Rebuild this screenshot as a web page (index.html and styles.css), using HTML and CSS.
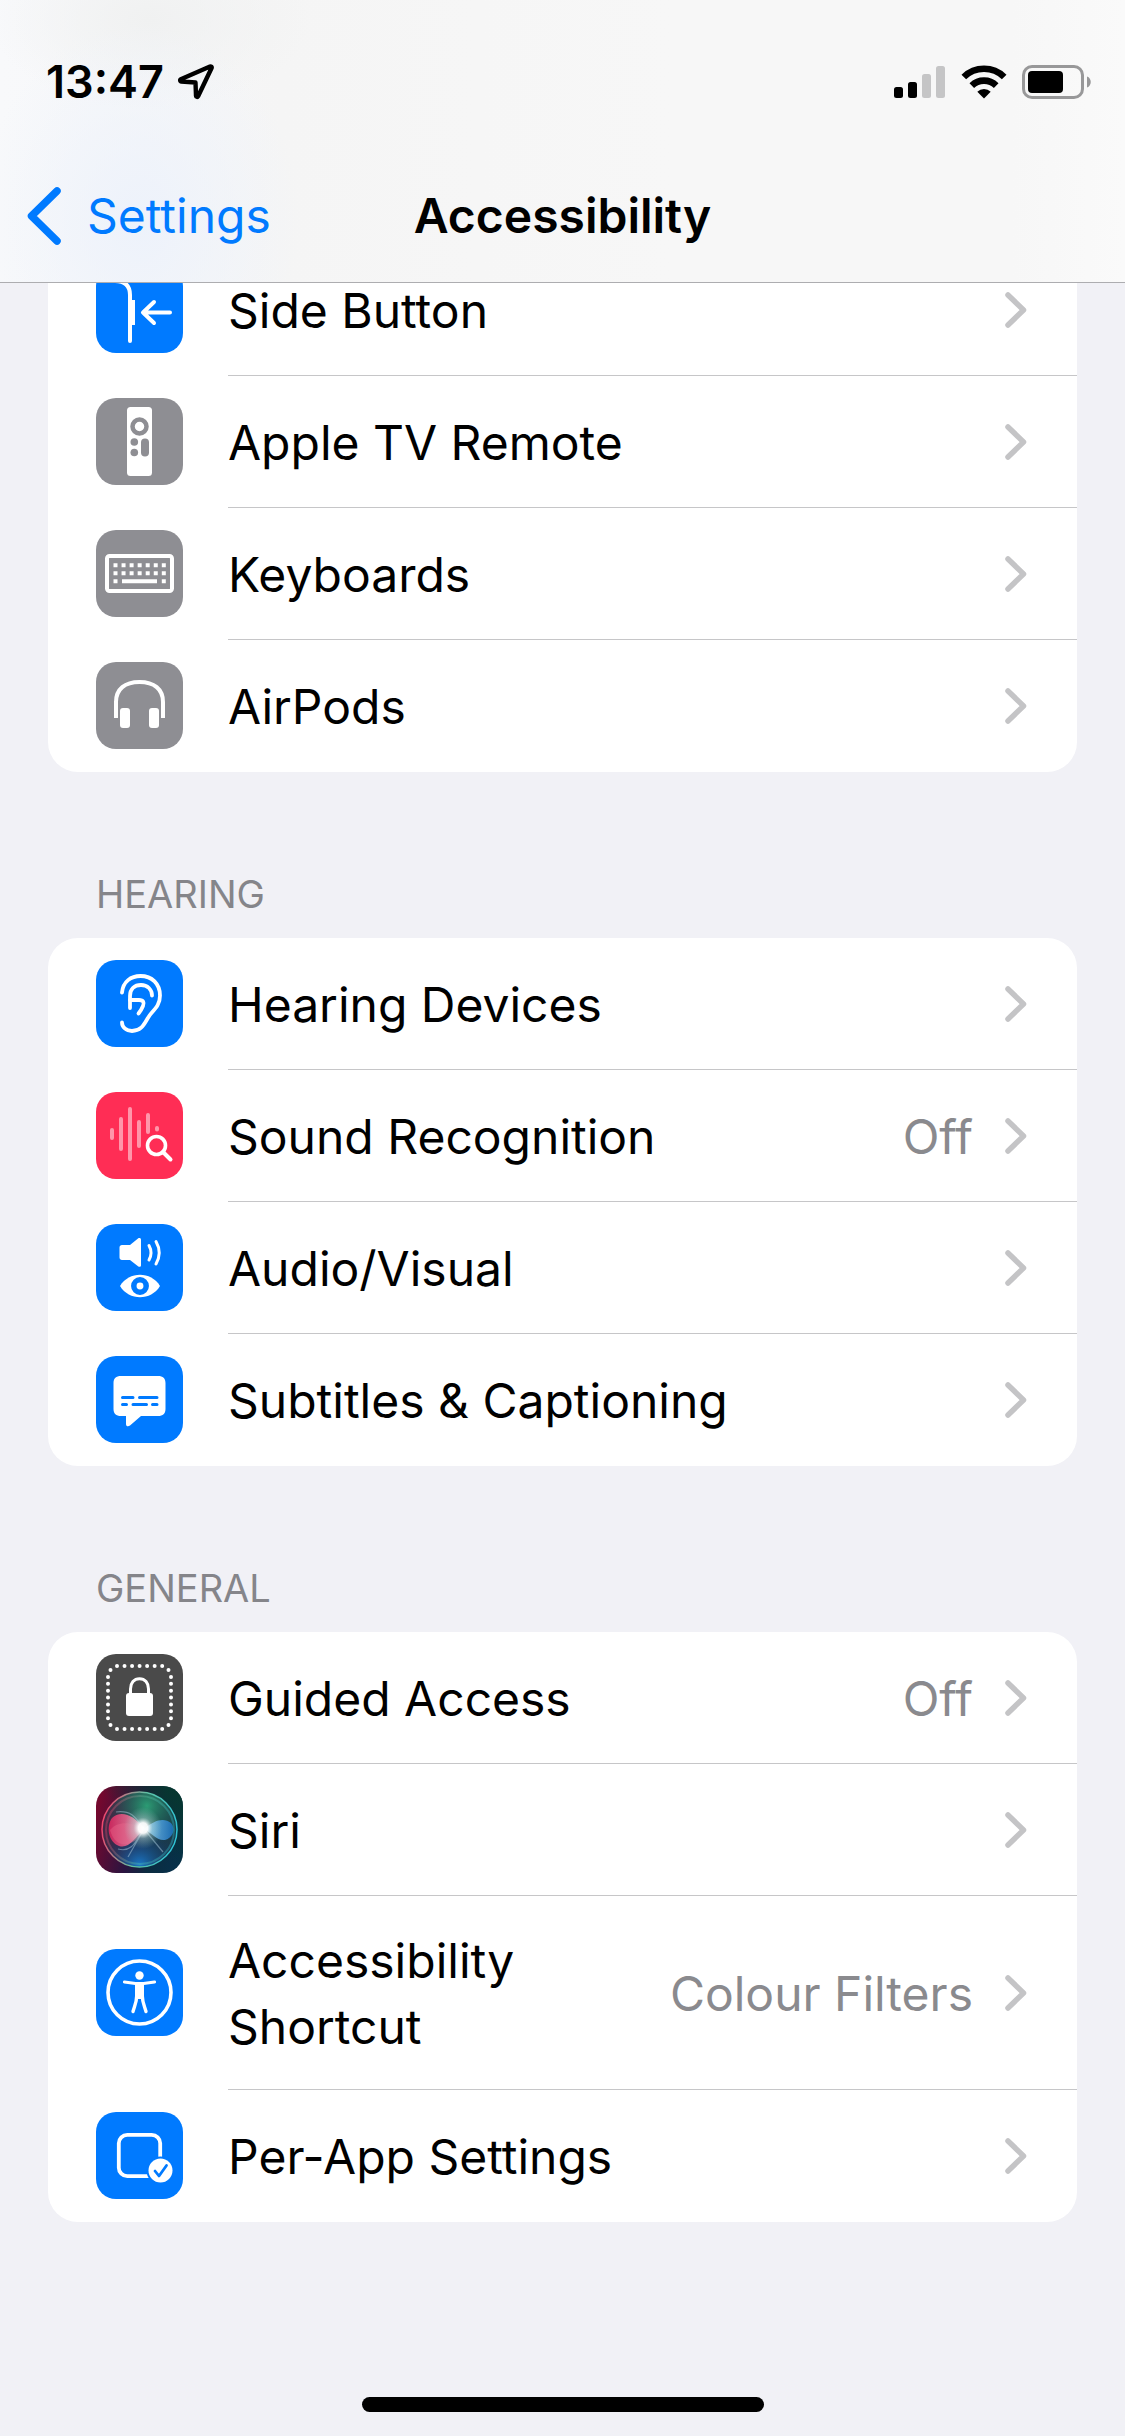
FILE: index.html
```html
<!DOCTYPE html>
<html lang="en-GB">
<head>
<meta charset="utf-8">
<meta name="viewport" content="width=device-width, initial-scale=1">
<title>Accessibility</title>
<link rel="stylesheet" href="styles.css">
</head>
<body>
<svg class="sprite" aria-hidden="true">
  <symbol id="chevron" viewBox="0 0 22 36"><path d="M3 3 18.500 18 3 33" fill="none" stroke="currentColor" stroke-width="5.500" stroke-linecap="round" stroke-linejoin="round"/></symbol>
</svg>

<header class="topbar">
  <div class="status">
    <div class="status-left">
      <span class="time">13:47</span>
      <svg class="location" viewBox="0 0 36 36" aria-label="Location in use"><path d="M32 2.500 2.800 15.200c-1 .5-.8 2.300.4 2.300L17.500 18.500l.5 13.300c.1 1.300 1.500 1.500 2.100.4L33.600 4c.4-1-.6-1.900-1.600-1.500Z" fill="none" stroke="#000" stroke-width="4.400" stroke-linejoin="round"/></svg>
    </div>
    <div class="status-right">
      <svg class="signal" viewBox="0 0 52 34" aria-label="Signal"><rect x="0" y="22" width="9" height="11" rx="2.500"/><rect x="14" y="17" width="9" height="16" rx="2.500"/><g fill="#c5c5c6"><rect x="28" y="9" width="9" height="24" rx="2.500"/><rect x="42" y="1" width="9" height="32" rx="2.500"/></g></svg>
      <svg class="wifi" viewBox="0 0 46 34" aria-label="Wi-Fi"><path d="M23 33.500 16.300 26.700a9.500 9.500 0 0 1 13.400 0Z"/><path d="M10.800 20.600a17.500 17.500 0 0 1 24.400 0M2.800 12a29 29 0 0 1 40.400 0" fill="none" stroke="#000" stroke-width="6.600"/></svg>
      <svg class="battery" viewBox="0 0 70 34" aria-label="Battery"><rect x="1.500" y="1.500" width="59" height="31" rx="8.500" fill="none" stroke="#989899" stroke-width="3"/><rect x="6" y="6" width="35" height="22" rx="4"/><path d="M65 11.500c5 1.500 5 9.500 0 11Z" fill="#989899"/></svg>
    </div>
  </div>
  <nav class="nav">
    <a class="back" href="#settings">
      <svg class="back-icon" viewBox="0 0 34 58" aria-hidden="true"><path d="M30 4 4.500 29 30 54" fill="none" stroke="currentColor" stroke-width="7.500" stroke-linecap="round" stroke-linejoin="round"/></svg>
      <span>Settings</span>
    </a>
    <h1 class="title">Accessibility</h1>
  </nav>
</header>

<main class="content">
  <section class="group group--first">
    <ul class="card">
      <li><a class="row" href="#side-button">
        <svg class="icon" viewBox="0 0 87 87"><rect width="87" height="87" rx="20" fill="#007aff"/><path d="M12 15h7c10 0 15 5 15 14v46" fill="none" stroke="#fff" stroke-width="4" stroke-linecap="round"/><path d="M35 34h4v25h-4Z" fill="#fff"/><path d="M74 46.500H47M58 36 47 46.500 58 57" fill="none" stroke="#fff" stroke-width="4" stroke-linecap="round" stroke-linejoin="round"/></svg>
        <span class="body"><span class="label">Side Button</span><svg class="chevron"><use href="#chevron"/></svg></span></a></li>
      <li><a class="row" href="#apple-tv-remote">
        <svg class="icon" viewBox="0 0 87 87"><rect width="87" height="87" rx="20" fill="#8e8e93"/><rect x="31" y="9" width="25" height="69" rx="3.500" fill="#fff"/><circle cx="43.500" cy="28.500" r="7" fill="none" stroke="#8e8e93" stroke-width="4.500"/><g fill="#8e8e93"><circle cx="38.300" cy="44" r="3.800"/><circle cx="38.300" cy="54.500" r="3.800"/><rect x="45" y="40.500" width="8" height="18" rx="4"/></g></svg>
        <span class="body"><span class="label">Apple TV Remote</span><svg class="chevron"><use href="#chevron"/></svg></span></a></li>
      <li><a class="row" href="#keyboards">
        <svg class="icon" viewBox="0 0 87 87"><rect width="87" height="87" rx="20" fill="#8e8e93"/><rect x="11" y="26" width="65" height="35" rx="2.500" fill="none" stroke="#fff" stroke-width="4"/><path d="M17.500 35.300h53M17.500 43.300h53" stroke="#fff" stroke-width="4" stroke-dasharray="4 4.050" fill="none"/><path d="M17.500 51.300h4M26 51.300h35M65.800 51.300h4" stroke="#fff" stroke-width="4"/></svg>
        <span class="body"><span class="label">Keyboards</span><svg class="chevron"><use href="#chevron"/></svg></span></a></li>
      <li><a class="row" href="#airpods">
        <svg class="icon" viewBox="0 0 87 87"><rect width="87" height="87" rx="20" fill="#8e8e93"/><path d="M20 56V40c0-13 9-20 23.500-20S67 27 67 40v16" fill="none" stroke="#fff" stroke-width="4"/><rect x="24" y="46" width="10" height="20" rx="3" fill="#fff"/><rect x="53" y="46" width="10" height="20" rx="3" fill="#fff"/></svg>
        <span class="body"><span class="label">AirPods</span><svg class="chevron"><use href="#chevron"/></svg></span></a></li>
    </ul>
  </section>

  <section class="group">
    <h2 class="heading">HEARING</h2>
    <ul class="card">
      <li><a class="row" href="#hearing-devices">
        <svg class="icon" viewBox="0 0 87 87"><rect width="87" height="87" rx="20" fill="#007aff"/><g fill="none" stroke="#fff" stroke-width="3.800" stroke-linecap="round" stroke-linejoin="round"><path d="M26 32.500C27 21.500 35 16 44.500 16 56 16 64 24 64 35.500c0 8-3.500 12-8.500 17.500C49 60 48 71 36 71c-6 0-10-4-10-8.500"/><path d="M34 48V36c0-7 4.500-11 11-11s11 4.500 11 10.500"/><path d="M34 40h9c4.500 0 5.500 2.500 4 6-1 2.500-2.500 5-4.500 7.500"/></g></svg>
        <span class="body"><span class="label">Hearing Devices</span><svg class="chevron"><use href="#chevron"/></svg></span></a></li>
      <li><a class="row" href="#sound-recognition">
        <svg class="icon" viewBox="0 0 87 87"><rect width="87" height="87" rx="20" fill="#ff2d55"/><path d="M16 38v8M25 27v30M34 17v50M43 30v24M52 23v17M61 36v1.500" stroke="#ff96aa" stroke-width="4" stroke-linecap="round"/><circle cx="60.500" cy="53.500" r="9" fill="#ff2d55" stroke="#fff" stroke-width="3.600"/><path d="m67 60 7.500 7.500" stroke="#fff" stroke-width="4" stroke-linecap="round"/></svg>
        <span class="body"><span class="label">Sound Recognition</span><span class="value">Off</span><svg class="chevron"><use href="#chevron"/></svg></span></a></li>
      <li><a class="row" href="#audio-visual">
        <svg class="icon" viewBox="0 0 87 87"><rect width="87" height="87" rx="20" fill="#007aff"/><path d="M26 21h8l8-6.500c1.500-1 3-.3 3 1.200v25.500c0 1.500-1.500 2.200-3 1L34 36h-8c-1.500 0-2.500-1-2.500-2.500v-10C23.500 22 24.500 21 26 21Z" fill="#fff"/><path d="M53 21.500c2.500 4.500 2.500 10 0 14.500M60 17.500c4 7 4 15.500 0 22.500" fill="none" stroke="#fff" stroke-width="3" stroke-linecap="round"/><path d="M24 62C33 47 55 47 64 62 55 77 33 77 24 62Z" fill="#fff"/><circle cx="44" cy="62" r="6.200" fill="#fff" stroke="#007aff" stroke-width="5.500"/></svg>
        <span class="body"><span class="label">Audio/Visual</span><svg class="chevron"><use href="#chevron"/></svg></span></a></li>
      <li><a class="row" href="#subtitles">
        <svg class="icon" viewBox="0 0 87 87"><rect width="87" height="87" rx="20" fill="#007aff"/><path d="M25 20h37c5 0 7.500 2.500 7.500 7v26c0 4.500-2.500 7-7.500 7H45L34 69.500c-2 1.500-4 .8-4-1.500v-8h-5c-5 0-7.500-2.500-7.500-7V27c0-4.500 2.500-7 7.500-7Z" fill="#fff"/><path d="M26.500 41.500H37M43.500 41.500h17.500M26.500 48.500h4M37 48.500h13.500M56.500 48.500H61" stroke="#007aff" stroke-width="3" stroke-linecap="round"/></svg>
        <span class="body"><span class="label">Subtitles &amp; Captioning</span><svg class="chevron"><use href="#chevron"/></svg></span></a></li>
    </ul>
  </section>

  <section class="group">
    <h2 class="heading">GENERAL</h2>
    <ul class="card">
      <li><a class="row" href="#guided-access">
        <svg class="icon" viewBox="0 0 87 87"><rect width="87" height="87" rx="20" fill="#4a4a4a"/><g stroke="#fff" stroke-width="4" stroke-linecap="round" fill="none"><path d="M21 12h46M21 75h46" stroke-dasharray="0 7.530"/><path d="M12 23v42M75 23v42" stroke-dasharray="0 6.860"/><path d="M14.500 16h0M72.500 16h0M14.500 71h0M72.500 71h0"/></g><rect x="30" y="39" width="27" height="23" rx="3" fill="#fff"/><path d="M34.500 40v-5c0-6 3.500-10.300 9-10.300s9 4.300 9 10.300v5" fill="none" stroke="#fff" stroke-width="3"/></svg>
        <span class="body"><span class="label">Guided Access</span><span class="value">Off</span><svg class="chevron"><use href="#chevron"/></svg></span></a></li>
      <li><a class="row" href="#siri">
        <svg class="icon" viewBox="0 0 87 87">
          <defs>
            <linearGradient id="siri-base" x1="0" y1=".35" x2="1" y2=".6"><stop offset="0" stop-color="#74082e"/><stop offset=".45" stop-color="#2b1440"/><stop offset=".7" stop-color="#0b2c40"/><stop offset="1" stop-color="#07304a"/></linearGradient>
            <linearGradient id="siri-corner" x1="1" y1="0" x2=".5" y2=".5"><stop offset="0" stop-color="#06382c"/><stop offset="1" stop-color="#06382c" stop-opacity="0"/></linearGradient>
            <radialGradient id="siri-green" cx=".6" cy=".18" r=".55"><stop offset="0" stop-color="#2c9c74"/><stop offset="1" stop-color="#1c5a50" stop-opacity="0"/></radialGradient>
            <radialGradient id="siri-blue" cx=".5" cy=".98" r=".5"><stop offset="0" stop-color="#1a78c8"/><stop offset="1" stop-color="#123a6c" stop-opacity="0"/></radialGradient>
            <radialGradient id="siri-glow"><stop offset="0" stop-color="#fff"/><stop offset=".25" stop-color="#fff" stop-opacity=".95"/><stop offset=".5" stop-color="#c4e6e4" stop-opacity=".4"/><stop offset="1" stop-color="#9adbd0" stop-opacity="0"/></radialGradient>
            <linearGradient id="siri-ring" x1="0" y1=".4" x2="1" y2=".6"><stop offset="0" stop-color="#f0476e"/><stop offset=".5" stop-color="#5fc3a4"/><stop offset="1" stop-color="#2ec4d8"/></linearGradient>
            <linearGradient id="siri-pink"><stop offset="0" stop-color="#d8275f"/><stop offset="1" stop-color="#f29bb4"/></linearGradient>
            <linearGradient id="siri-cyan"><stop offset="0" stop-color="#8fd0f5"/><stop offset="1" stop-color="#1b74c4"/></linearGradient>
          </defs>
          <rect width="87" height="87" rx="20" fill="url(#siri-base)"/>
          <rect width="87" height="87" rx="20" fill="url(#siri-corner)"/>
          <circle cx="43.500" cy="43.500" r="37" fill="#2c4458" fill-opacity=".5"/>
          <circle cx="43.500" cy="43.500" r="37" fill="url(#siri-green)"/>
          <circle cx="43.500" cy="43.500" r="37" fill="url(#siri-blue)"/>
          <path d="M48 43C38 28 24 24 16 32c-6 8-4 24 7 28 10 3 16-8 25-17Z" fill="url(#siri-pink)" fill-opacity=".9"/>
          <path d="M14 44c8-10 24-8 34 0-8 16-28 22-34 0Z" fill="#f06f91" fill-opacity=".35"/>
          <path d="M48 43c10-9 20-12 27-6 5 6 2 15-6 17-8 1-12-6-21-11Z" fill="url(#siri-cyan)" fill-opacity=".85"/>
          <path d="M48 43 32 71M48 43l19 23M20 26c16-2 20 6 28 17M22 63c14 4 18-8 26-20" fill="none" stroke="#a9c9dc" stroke-opacity=".5" stroke-width="1.200"/>
          <ellipse cx="47" cy="42" rx="19" ry="21" fill="url(#siri-glow)"/>
          <circle cx="43.500" cy="43.500" r="37.500" fill="none" stroke="url(#siri-ring)" stroke-width="1.500"/>
          <circle cx="44" cy="44" r="34" fill="none" stroke="url(#siri-ring)" stroke-opacity=".35" stroke-width="2"/>
        </svg>
        <span class="body"><span class="label">Siri</span><svg class="chevron"><use href="#chevron"/></svg></span></a></li>
      <li><a class="row" href="#accessibility-shortcut">
        <svg class="icon" viewBox="0 0 87 87"><rect width="87" height="87" rx="20" fill="#007aff"/><circle cx="43.500" cy="43.500" r="31.500" fill="none" stroke="#fff" stroke-width="3.600"/><circle cx="43.500" cy="26.500" r="4.200" fill="#fff"/><path d="M28.500 33 39.500 34.500h8L58.500 33" fill="none" stroke="#fff" stroke-width="3.200" stroke-linecap="round" stroke-linejoin="round"/><path d="M39 34h9v14l-2 2h-5l-2-2Z" fill="#fff"/><path d="M40.700 47c0 6-2.200 10-3.700 15.500M46.300 47c0 6 2.200 10 3.700 15.500" fill="none" stroke="#fff" stroke-width="3.400" stroke-linecap="round"/></svg>
        <span class="body"><span class="label">Accessibility Shortcut</span><span class="value">Colour Filters</span><svg class="chevron"><use href="#chevron"/></svg></span></a></li>
      <li><a class="row" href="#per-app-settings">
        <svg class="icon" viewBox="0 0 87 87"><rect width="87" height="87" rx="20" fill="#007aff"/><rect x="22.800" y="22.800" width="41.400" height="41.400" rx="8.500" fill="none" stroke="#fff" stroke-width="3.800"/><circle cx="64.500" cy="58.500" r="14" fill="#007aff"/><circle cx="64.500" cy="58.500" r="12" fill="#fff"/><path d="m59 59 4 5 7.500-10.500" fill="none" stroke="#007aff" stroke-width="2.800" stroke-linecap="round" stroke-linejoin="round"/></svg>
        <span class="body"><span class="label">Per-App Settings</span><svg class="chevron"><use href="#chevron"/></svg></span></a></li>
    </ul>
  </section>
</main>
<footer class="home"><span class="home-bar"></span></footer>
</body>
</html>
```
FILE: styles.css
```css
* { box-sizing: border-box; }

body {
  margin: 0;
  min-height: 100vh;
  display: flex;
  flex-direction: column;
  background: #f1f1f6;
  color: #000;
  font-family: Inter, "Liberation Sans", sans-serif;
  font-size: 48px;
  line-height: 66px;
}

a { color: inherit; text-decoration: none; }
svg { display: block; flex: none; }
.sprite { position: absolute; width: 0; height: 0; }

.topbar {
  position: sticky;
  top: 0;
  z-index: 1;
  border-bottom: 1px solid #adadb0;
  background:
    radial-gradient(ellipse 160px 200px at 140px 220px, #edf2fb, transparent),
    radial-gradient(ellipse 160px 90px at 150px 20px, #f0f1f1, transparent),
    linear-gradient(90deg, #f8f9fb, #f5f5f5 25%, #f7f7f7 60%, #f7f7f7 90%, #fafafa);
}

.status {
  display: flex;
  justify-content: space-between;
  align-items: center;
  height: 132px;
  padding: 32px 33px 0 46px;
}
.status-left { display: flex; align-items: center; gap: 14px; }
.status-right { display: flex; align-items: center; gap: 15px; }
.time { font-size: 45px; font-weight: 600; }
.location { width: 36px; height: 36px; }
.signal { width: 52px; height: 34px; }
.wifi { width: 46px; height: 34px; }
.battery { width: 70px; height: 34px; }

.nav {
  display: grid;
  grid-template-columns: 1fr auto 1fr;
  align-items: center;
  height: 150px;
  padding: 18px 27px 0;
}
.back { display: flex; align-items: center; gap: 26px; color: #007aff; }
.back-icon { width: 34px; height: 58px; }
.title { margin: 0; font-size: 48px; font-weight: 600; }

.content { padding: 0 48px; }
.group--first { margin-top: -39px; }
.card {
  margin: 0;
  padding: 0;
  list-style: none;
  border-radius: 30px;
  background: #fff;
  overflow: hidden;
}
.heading {
  margin: 0;
  padding: 94px 48px 16px;
  color: #85858a;
  font-size: 38px;
  font-weight: 400;
  line-height: 56px;
}

.row { display: flex; align-items: center; gap: 45px; padding-left: 48px; }
.icon { width: 87px; height: 87px; margin-bottom: 1px; }
.body {
  flex: 1;
  display: flex;
  align-items: center;
  min-height: 132px;
  padding: 30px 50px 29px 0;
  border-bottom: 1px solid #c6c6c8;
}
li:last-child .body { border-color: transparent; }
.label { flex: 1; min-width: 0; padding-top: 2px; }
.value { padding-top: 2px; color: #8a8a8e; }
.chevron { width: 22px; height: 36px; margin-left: 32px; color: #c4c4c6; }

.home { margin-top: auto; display: flex; justify-content: center; padding: 24px; }
.home-bar { width: 402px; height: 15px; border-radius: 8px; background: #000; }
```
